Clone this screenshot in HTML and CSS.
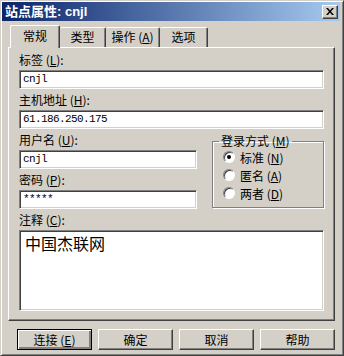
FILE: index.html
```html
<!DOCTYPE html>
<html lang="zh-CN">
<head>
    <meta charset="UTF-8">
    <title>站点属性</title>
    <link rel="stylesheet" href="styles.css">
</head>
<body>
<div id="dialog">
    <div class="title-bar">
        <span class="title-text">站点属性: cnjl</span>
        <span class="close-btn">
            <svg width="8" height="7" viewBox="0 0 8 7"><path d="M0 0h2l2 2.5 2-2.5h2l-3 3.5 3 3.5h-2l-2-2.5-2 2.5h-2l3-3.5z" fill="#000"/></svg>
        </span>
    </div>

    <div class="tabs">
        <span class="tab tab-on">常规</span>
        <span class="tab tab-type">类型</span>
        <span class="tab tab-act">操作 (<u>A</u>)</span>
        <span class="tab tab-opt">选项</span>
    </div>

    <div class="panel">
        <div class="label">标签 (<u>L</u>):</div>
        <div class="edit">cnjl</div>

        <div class="label">主机地址 (<u>H</u>):</div>
        <div class="edit">61.186.250.175</div>

        <div class="row">
            <div class="col-left">
                <div class="label">用户名 (<u>U</u>):</div>
                <div class="edit">cnjl</div>
                <div class="label">密码 (<u>P</u>):</div>
                <div class="edit">*****</div>
            </div>
            <fieldset class="group">
                <legend>登录方式 (<u>M</u>)</legend>
                <div class="radio-row"><span class="radio checked"></span><span>标准 (<u>N</u>)</span></div>
                <div class="radio-row"><span class="radio"></span><span>匿名 (<u>A</u>)</span></div>
                <div class="radio-row"><span class="radio"></span><span>两者 (<u>D</u>)</span></div>
            </fieldset>
        </div>

        <div class="label">注释 (<u>C</u>):</div>
        <div class="edit memo">中国杰联网</div>
    </div>

    <div class="buttons">
        <span class="btn btn-default">连接 (<u>E</u>)</span>
        <span class="btn">确定</span>
        <span class="btn">取消</span>
        <span class="btn">帮助</span>
    </div>
</div>
</body>
</html>
```

FILE: styles.css
```css
*{
    margin: 0;
    padding: 0;
    box-sizing: border-box;
}
body{
    background: #d4d0c8;
    font-family: "Noto Sans CJK SC", "Liberation Sans", sans-serif;
    font-size: 12px;
    color: #000;
}
u{
    text-decoration: underline;
}

#dialog{
    width: 344px;
    height: 356px;
    background: #d4d0c8;
    border: 1px solid;
    border-color: #d4d0c8 #404040 #404040 #d4d0c8;
    box-shadow: inset 1px 1px #fff, inset -1px -1px #808080;
    padding: 1px 3px 2px 1px;
}

/* title bar */
.title-bar{
    height: 19px;
    background: linear-gradient(to right, #0a246a, #a6caf0);
    display: flex;
    align-items: center;
    justify-content: space-between;
    padding: 0 2px 0 3px;
}
.title-text{
    color: #fff;
    font-family: "Liberation Sans", "Noto Sans CJK SC", sans-serif;
    font-weight: bold;
    font-size: 13px;
    line-height: 19px;
}
.close-btn{
    width: 16px;
    height: 14px;
    background: #d4d0c8;
    border: 1px solid;
    border-color: #fff #404040 #404040 #fff;
    box-shadow: inset -1px -1px #808080;
    display: flex;
    align-items: center;
    justify-content: center;
}

/* tabs */
.tabs{
    display: flex;
    align-items: flex-end;
    height: 24px;
    margin-top: 2px;
    padding-left: 8px;
    position: relative;
    z-index: 2;
}
.tab{
    height: 20px;
    line-height: 17px;
    text-align: center;
    border: 1px solid;
    border-bottom: none;
    border-color: #fff #404040 #404040 #fff;
    box-shadow: inset -1px 0 #808080;
    border-radius: 2px 2px 0 0;
    background: #d4d0c8;
}
.tab-on{
    width: 50px;
    height: 23px;
    margin-bottom: -1px;
    line-height: 19px;
}
.tab-type{
    width: 46px;
    border-left: none;
}
.tab-act{
    width: 54px;
    border-left: none;
}
.tab-opt{
    width: 48px;
    border-left: none;
}

.panel{
    width: 327px;
    margin-left: 6px;
    height: 274px;
    border: 1px solid;
    border-color: #fff #404040 #404040 #fff;
    box-shadow: inset -1px -1px #808080;
    padding: 5px 10px 0 10px;
}
.label{
    height: 14px;
    line-height: 14px;
    margin-bottom: 3px;
}
.edit{
    height: 19px;
    margin-bottom: 4px;
    background: #fff;
    border: 1px solid;
    border-color: #808080 #fff #fff #808080;
    box-shadow: inset 1px 1px #404040, inset -1px -1px #d4d0c8;
    font-family: "Liberation Mono", monospace;
    font-size: 11px;
    letter-spacing: -0.6px;
    line-height: 17px;
    padding-left: 3px;
}
.row{
    display: flex;
    gap: 15px;
}
.col-left{
    width: 178px;
}
.group{
    width: 112px;
    height: 74px;
    margin-top: 1px;
    border: 1px solid #808080;
    box-shadow: inset 1px 1px #fff, 1px 1px #fff;
    padding: 0 0 0 6px;
}
.group legend{
    padding: 0 2px;
    line-height: 14px;
}
.radio-row{
    height: 18px;
    display: flex;
    align-items: center;
    gap: 5px;
    padding-left: 4px;
}
.radio{
    width: 12px;
    height: 12px;
    border-radius: 50%;
    background: #fff;
    border: 1px solid;
    border-color: #808080 #fff #fff #808080;
    box-shadow: inset 1px 1px #404040;
    display: flex;
    align-items: center;
    justify-content: center;
}
.radio.checked::after{
    content: "";
    width: 4px;
    height: 4px;
    border-radius: 50%;
    background: #000;
}
.memo{
    height: 81px;
    font-family: "Noto Sans CJK SC", sans-serif;
    font-size: 16px;
    letter-spacing: 0;
    line-height: 20px;
    padding: 2px 5px;
}

/* buttons */
.buttons{
    display: flex;
    gap: 6px;
    padding: 8px 0 0 15px;
}
.btn{
    width: 75px;
    height: 21px;
    line-height: 19px;
    text-align: center;
    border: 1px solid;
    border-color: #fff #404040 #404040 #fff;
    box-shadow: inset -1px -1px #808080;
}
.btn-default{
    border: 1px solid #000;
    box-shadow: inset 1px 1px #fff, inset -2px -2px #808080, inset -1px -1px #404040;
}
```
